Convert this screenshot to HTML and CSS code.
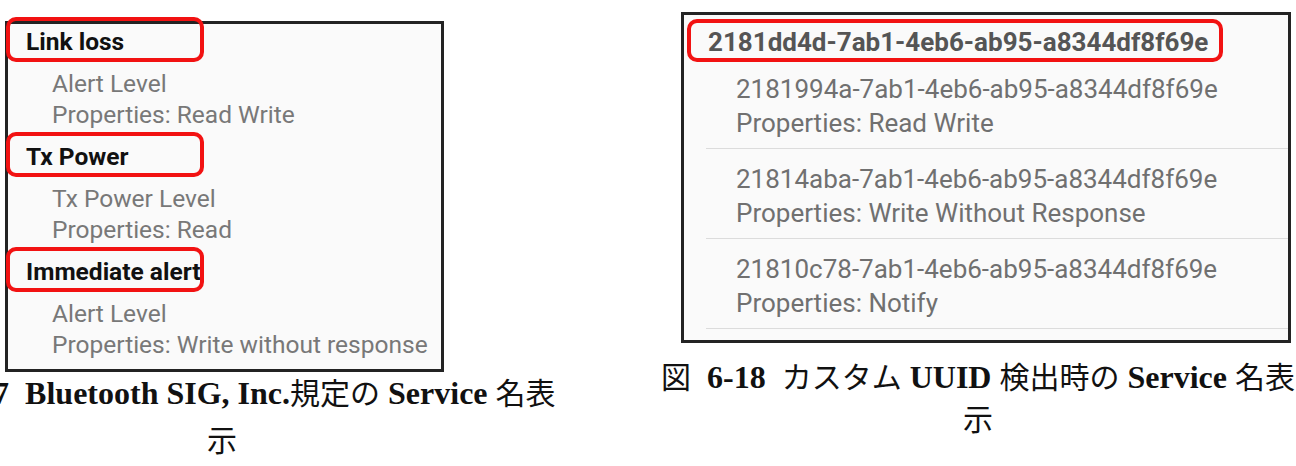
FILE: index.html
```html
<!DOCTYPE html>
<html lang="ja">
<head>
<meta charset="utf-8">
<title>Service 名表示</title>
<link rel="stylesheet" href="styles.css">
</head>
<body>
<main class="sheet">
  <figure class="fig fig-sig">
    <div class="panel panel-sig">
      <section class="svc">
        <h3 class="svc-name marked">Link loss</h3>
        <ul class="chars">
          <li>Alert Level</li>
          <li>Properties: Read Write</li>
        </ul>
      </section>
      <section class="svc">
        <h3 class="svc-name marked">Tx Power</h3>
        <ul class="chars">
          <li>Tx Power Level</li>
          <li>Properties: Read</li>
        </ul>
      </section>
      <section class="svc">
        <h3 class="svc-name marked">Immediate alert</h3>
        <ul class="chars">
          <li>Alert Level</li>
          <li>Properties: Write without response</li>
        </ul>
      </section>
    </div>
    <figcaption class="caption caption-sig"><span class="jp">図</span>&nbsp;&nbsp;&nbsp; 6-17&nbsp; Bluetooth SIG, Inc.<span class="jp">規定の</span> Service <span class="jp">名表</span><br><span class="jp">示</span></figcaption>
  </figure>

  <figure class="fig fig-uuid">
    <div class="panel panel-uuid">
      <h3 class="uuid-name marked">2181dd4d-7ab1-4eb6-ab95-a8344df8f69e</h3>
      <ul class="uuid-list">
        <li class="uuid-row">
          <span class="uuid">2181994a-7ab1-4eb6-ab95-a8344df8f69e</span>
          <span class="props">Properties: Read Write</span>
        </li>
        <li class="uuid-row">
          <span class="uuid">21814aba-7ab1-4eb6-ab95-a8344df8f69e</span>
          <span class="props">Properties: Write Without Response</span>
        </li>
        <li class="uuid-row">
          <span class="uuid">21810c78-7ab1-4eb6-ab95-a8344df8f69e</span>
          <span class="props">Properties: Notify</span>
        </li>
      </ul>
    </div>
    <figcaption class="caption caption-uuid"><span class="jp">図</span>&nbsp; 6-18&nbsp; <span class="jp">カスタム</span> UUID <span class="jp">検出時の</span> Service <span class="jp">名表</span><br><span class="jp">示</span></figcaption>
  </figure>
</main>
</body>
</html>
```

FILE: styles.css
```css
html, body {
  margin: 0;
  padding: 0;
  overflow: hidden;
  background: #ffffff;
}

.sheet {
  display: flex;
  align-items: flex-start;
  width: 1296px;
  height: 466px;
}

.fig {
  margin: 0;
  display: flex;
  flex-direction: column;
}

/* ---------- screenshot panels ---------- */

.panel {
  box-sizing: border-box;
  border: 3px solid #232323;
  background: #fafafa;
  font-family: Roboto, "Noto Sans", sans-serif;
}

ul {
  list-style: none;
  margin: 0;
  padding: 0;
}

h3 {
  margin: 0;
}

/* left: standard services */
.fig-sig {
  width: 444px;
  padding-top: 21px;
}

.panel-sig {
  margin-left: 5px;
  width: 439px;
  padding-top: 2px;
}

.svc-name {
  position: relative;
  padding-left: 18px;
  font-size: 24.5px;
  line-height: 31px;
  font-weight: 700;
  color: #111111;
}

.chars {
  padding: 11px 0 11px 44px;
  font-size: 24.5px;
  line-height: 31px;
  color: #787878;
}

.svc:last-child .chars {
  padding-bottom: 9px;
}

/* right: custom UUID services */
.fig-uuid {
  width: 610px;
  margin-left: 237px;
  padding-top: 12px;
}

.panel-uuid {
  width: 610px;
  padding-bottom: 11px;
}

.uuid-name {
  position: relative;
  padding: 10px 0 0 24px;
  font-size: 26px;
  line-height: 34px;
  font-weight: 700;
  color: #555555;
}

.uuid-list {
  margin-left: 22px;
}

.uuid-row {
  display: flex;
  flex-direction: column;
  padding: 13px 0 8px 30px;
  border-bottom: 1px solid #dcdcdc;
  font-size: 26px;
  line-height: 34px;
  color: #707070;
}

/* red highlight frames drawn over the service names */
.marked::after {
  content: "";
  position: absolute;
  box-sizing: border-box;
  border: 4px solid #f21212;
  border-radius: 10px;
}

.svc-name.marked::after {
  left: -2px;
  top: -9px;
  width: 198px;
  height: 45px;
}

.uuid-name.marked::after {
  left: 3px;
  top: 4px;
  width: 536px;
  height: 43px;
}

/* ---------- captions ---------- */

.caption {
  font-family: "Liberation Serif", "Noto Sans CJK JP", serif;
  font-weight: 700;
  font-size: 32px;
  color: #111111;
  text-align: center;
  white-space: nowrap;
}

.caption .jp {
  font-family: "Noto Sans CJK JP", sans-serif;
  font-weight: 400;
  font-size: 30px;
}

.caption-sig {
  margin: -3px -400px 0;
  line-height: 45px;
}

.caption-uuid {
  margin: 12px -400px 0 -416px;
  line-height: 40px;
}
```
